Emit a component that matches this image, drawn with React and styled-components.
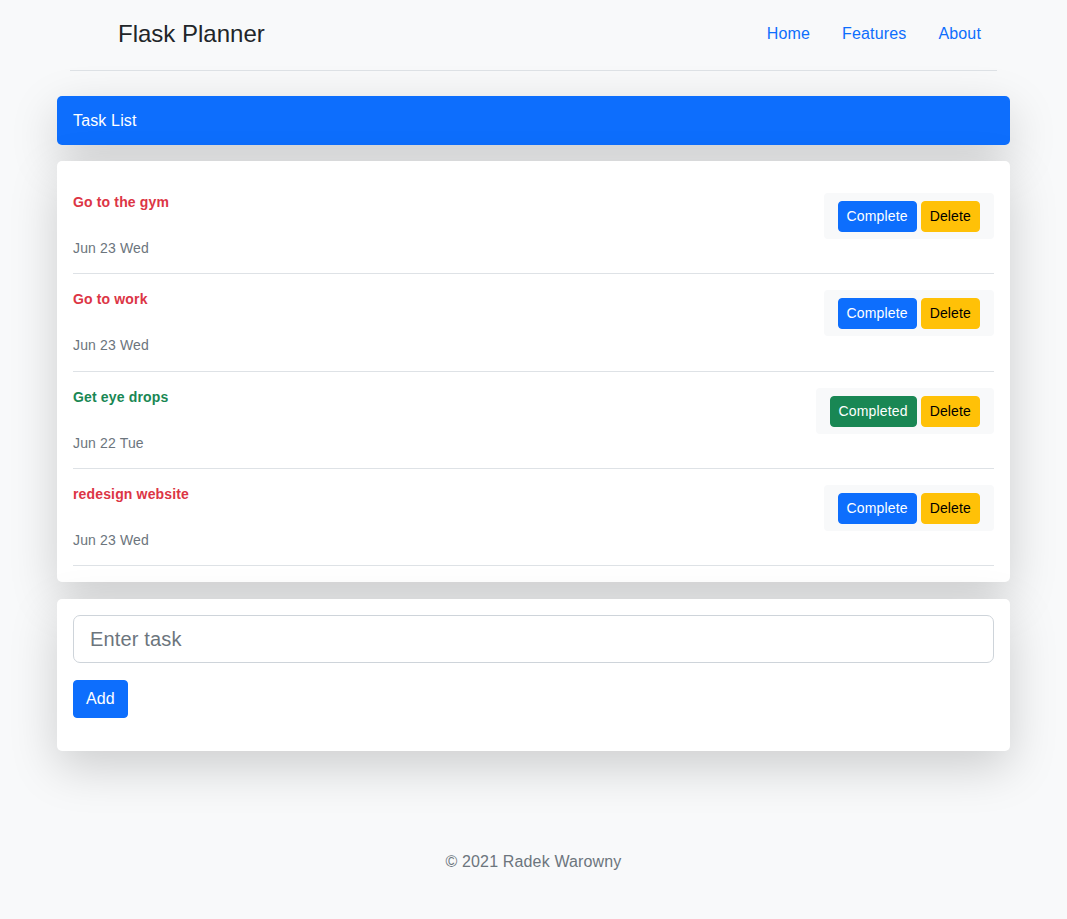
import React from "react";
import styled, { createGlobalStyle } from "styled-components";

const Global = createGlobalStyle`
  html, body { margin: 0; padding: 0; }
  body {
    background: #f8f9fa;
    font-family: "Liberation Sans", Arial, sans-serif;
    color: #212529;
    letter-spacing: 0.15px;
  }
  * { box-sizing: border-box; }
`;

const Page = styled.div`
  width: 953px;
  margin: 0 auto;
  min-height: 919px;
  display: flex;
  flex-direction: column;
`;

const Header = styled.header`
  margin: 0 13px;
  height: 71px;
  border-bottom: 1px solid #dee2e6;
  display: flex;
  align-items: center;
  justify-content: space-between;
  padding: 0 0 4px 48px;
`;

const Brand = styled.span`
  font-size: 24px;
  line-height: 29px;
  letter-spacing: 0;
  color: #212529;
`;

const Nav = styled.nav`
  display: flex;
  margin-top: 2px;
`;

const NavLink = styled.a`
  color: #0d6efd;
  text-decoration: none;
  font-size: 16px;
  line-height: 24px;
  padding: 8px 16px;
`;

const Main = styled.main`
  margin-top: 25px;
  display: flex;
  flex-direction: column;
  gap: 16px;
`;

const Card = styled.section`
  background: ${(p) => (p.$primary ? "#0d6efd" : "#fff")};
  color: ${(p) => (p.$primary ? "#fff" : "#212529")};
  border-radius: 5px;
  box-shadow: 0 1rem 3rem rgba(0, 0, 0, 0.175);
  padding: ${(p) => p.$pad || "16px"};
  margin-bottom: ${(p) => p.$after || "0"};
`;

const CardTitle = styled.div`
  font-size: 16px;
  line-height: 24px;
`;

const TaskRow = styled.div`
  display: flex;
  justify-content: space-between;
  align-items: flex-start;
  padding: 15px 0 14.25px;
  border-bottom: 1px solid #dee2e6;
`;

const TaskInfo = styled.div`
  display: flex;
  flex-direction: column;
`;

const TaskTitle = styled.div`
  font-size: 14px;
  line-height: 21px;
  font-weight: 700;
  color: ${(p) => (p.$done ? "#198754" : "#dc3545")};
  margin-bottom: 25px;
`;

const TaskDate = styled.div`
  font-size: 14px;
  line-height: 21px;
  color: #6c757d;
`;

const Actions = styled.div`
  margin-top: 1px;
  background: #f8f9fa;
  border-radius: 4px;
  padding: 8px 14px 7px 14px;
  display: flex;
  gap: 4px;
`;

const colors = {
  primary: { bg: "#0d6efd", fg: "#fff" },
  success: { bg: "#198754", fg: "#fff" },
  warning: { bg: "#ffc107", fg: "#000" },
};

const SmallButton = styled.button`
  font-family: inherit;
  letter-spacing: 0.15px;
  font-size: 14px;
  line-height: 21px;
  padding: 4px 8px;
  border: 1px solid ${(p) => colors[p.$variant].bg};
  background: ${(p) => colors[p.$variant].bg};
  color: ${(p) => colors[p.$variant].fg};
  border-radius: 4px;
  cursor: pointer;
`;

const TaskInput = styled.input`
  display: block;
  width: 100%;
  height: 48px;
  font-family: inherit;
  letter-spacing: 0.15px;
  font-size: 20px;
  padding: 8px 16px;
  border: 1px solid #ced4da;
  border-radius: 7px;
  color: #212529;
  background: #fff;
  &::placeholder { color: #6c757d; }
  outline: none;
`;

const AddButton = styled.button`
  margin-top: 17px;
  margin-bottom: 17px;
  font-family: inherit;
  letter-spacing: 0.15px;
  font-size: 16px;
  line-height: 24px;
  padding: 6px 12px;
  height: 38px;
  border: 1px solid #0d6efd;
  background: #0d6efd;
  color: #fff;
  border-radius: 4px;
  cursor: pointer;
`;

const Footer = styled.footer`
  margin-top: 99px;
  text-align: center;
  font-size: 16px;
  line-height: 24px;
  color: #6c757d;
`;

const tasks = [
  { title: "Go to the gym", date: "Jun 23 Wed", done: false },
  { title: "Go to work", date: "Jun 23 Wed", done: false },
  { title: "Get eye drops", date: "Jun 22 Tue", done: true },
  { title: "redesign website", date: "Jun 23 Wed", done: false },
];

export default function App() {
  return (
    <>
      <Global />
      <Page>
        <Header>
          <Brand>Flask Planner</Brand>
          <Nav>
            <NavLink href="#">Home</NavLink>
            <NavLink href="#">Features</NavLink>
            <NavLink href="#">About</NavLink>
          </Nav>
        </Header>
        <Main>
          <Card $primary $pad="13px 16px 12px">
            <CardTitle>Task List</CardTitle>
          </Card>
          <Card $after="1px">
            {tasks.map((t) => (
              <TaskRow key={t.title}>
                <TaskInfo>
                  <TaskTitle $done={t.done}>{t.title}</TaskTitle>
                  <TaskDate>{t.date}</TaskDate>
                </TaskInfo>
                <Actions>
                  <SmallButton $variant={t.done ? "success" : "primary"}>
                    {t.done ? "Completed" : "Complete"}
                  </SmallButton>
                  <SmallButton $variant="warning">Delete</SmallButton>
                </Actions>
              </TaskRow>
            ))}
          </Card>
          <Card>
            <TaskInput placeholder="Enter task" />
            <AddButton>Add</AddButton>
          </Card>
        </Main>
        <Footer>© 2021 Radek Warowny</Footer>
      </Page>
    </>
  );
}
